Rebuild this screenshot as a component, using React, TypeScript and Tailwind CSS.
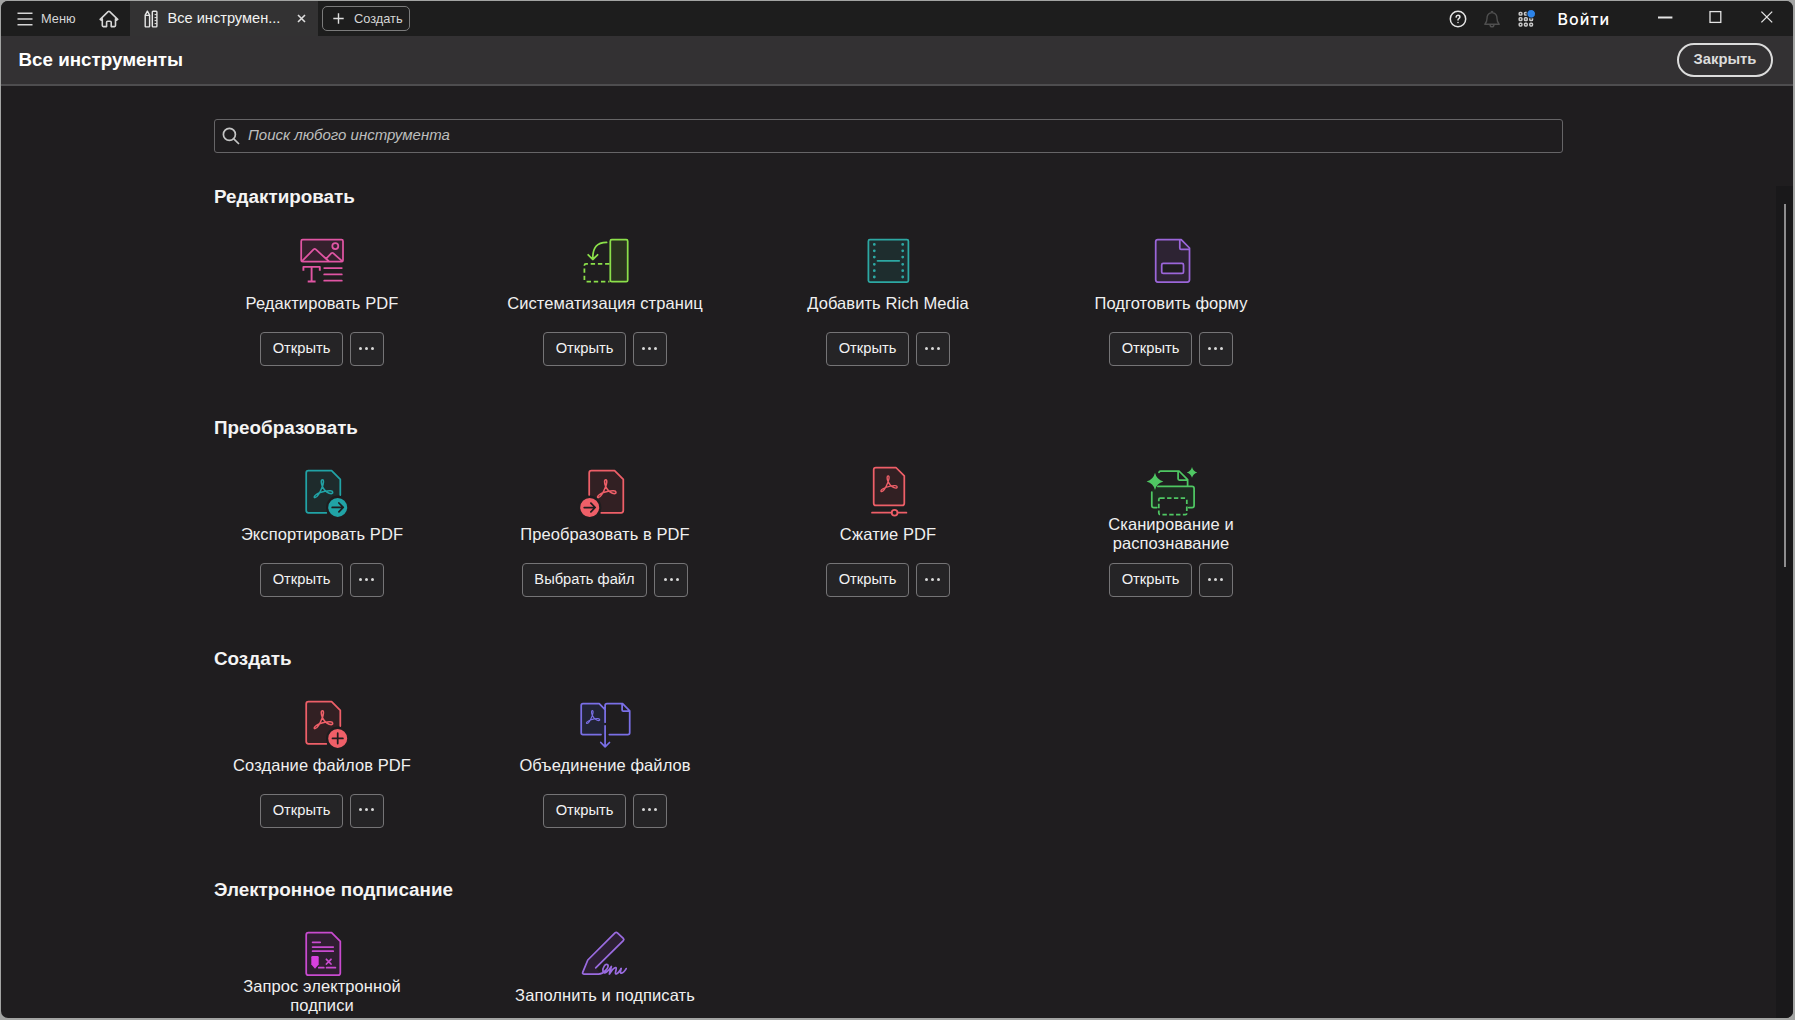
import type { ReactNode } from 'react';

type Tool = {
  title: string;
  icon: ReactNode;
  action?: string;
};

type Section = {
  title: string;
  tools: Tool[];
  collapsed?: boolean;
};

const ToolIcon = ({ color, children }: { color: string; children: ReactNode }) => (
  <svg
    viewBox="0 0 56 49"
    className="block h-[49px] w-14 shrink-0 overflow-visible"
    fill="none"
    stroke={color}
    strokeWidth="1.75"
    strokeLinecap="round"
    strokeLinejoin="round"
  >
    {children}
  </svg>
);

// Acrobat trefoil, centred on 0,0
const Trefoil = ({ x, y, scale = 1 }: { x: number; y: number; scale?: number }) => (
  <path
    transform={`translate(${x} ${y}) scale(${scale})`}
    strokeWidth={1.55}
    d="M0-9.4C-1.7-9.4-1.5-6.2-.2-3C1.2.3 3.6 2.8 6.6 4C9 4.9 10.4 4.3 10.2 3C9.9 1.4 6.5 1.3 2.5 2.1C-1 2.8-4.8 4.1-6.9 5.8C-8.6 7.1-8.6 8.6-7.4 8.4C-5.4 8.1-2.4 3-.5-1.7C1.1-5.6 1.6-9.4 0-9.4Z"
  />
);

const EditIcon = () => (
  <ToolIcon color="#e055a3">
    <rect x="7.2" y="5.7" width="41.8" height="22" rx="1.5" fill="#35202d" />
    <circle cx="41.3" cy="12" r="3" />
    <path d="M8 27.2L19.6 15.4Q20.7 14.5 21.8 15.4L34.5 27M32.2 24.6L37.4 19.2Q38.3 18.4 39.2 19.2L48.2 27.2" />
    <path d="M9.4 36.8V32.9H25.8V36.8M17.6 33V47.4M13.7 47.5H21.6" strokeLinecap="butt" strokeWidth="1.9" />
    <path d="M30.2 34H47.8M30.2 40.4H47.8M30.2 46.7H47.8" />
  </ToolIcon>
);

const OrganizeIcon = () => (
  <ToolIcon color="#8be04a">
    <rect x="33.3" y="5.7" width="17.4" height="42" rx="1.5" fill="#2a331f" />
    <path d="M32.5 29.8H9Q7.4 29.8 7.4 31.4V46Q7.4 47.6 9 47.6H32.5" strokeDasharray="4.4 2.8" strokeLinecap="butt" />
    <path d="M29.6 8.4C20 8.4 15.7 13.2 15.7 25.3M11.2 20.8L15.7 25.5L20.6 20.8" />
  </ToolIcon>
);

const MediaIcon = () => (
  <ToolIcon color="#2da8a3">
    <rect x="8.4" y="5.7" width="40" height="42.3" rx="1.5" fill="#1e2d2e" />
    <path d="M17.5 26.8H39.2" />
    {[10.4, 16.8, 23.1, 30.3, 36.7, 43].map((y) => (
      <path key={y} d={`M14.3 ${y}h.01M42.7 ${y}h.01`} strokeWidth="2.8" />
    ))}
  </ToolIcon>
);

const FormIcon = () => (
  <ToolIcon color="#9b66d9">
    <path d="M14.8 5.7H38.2L46.5 14V45.8Q46.5 48 44.3 48H14.8Q12.7 48 12.7 45.8V7.8Q12.7 5.7 14.8 5.7Z" fill="#2d2333" />
    <path d="M36.8 6V14Q36.8 15.3 38 15.3H46" />
    <rect x="18.7" y="29.4" width="21.8" height="10" rx="1.5" fill="#1f1d1f" />
  </ToolIcon>
);

const ExportIcon = () => (
  <ToolIcon color="#21a3a6">
    <path d="M46.3 30V14.4L37.6 5.7H14.4Q12.2 5.7 12.2 7.9V45.6Q12.2 47.8 14.4 47.8H32.4L38 32Z" fill="#1e2b2c" stroke="none" />
    <path d="M46.3 30V14.4L37.6 5.7H14.4Q12.2 5.7 12.2 7.9V45.6Q12.2 47.8 14.4 47.8H32.4" />
    <Trefoil x={28.5} y={24.2} />
    <circle cx="43.7" cy="42.4" r="10.6" fill="#21a3a6" stroke="#1f1d1f" strokeWidth="2.2" />
    <path d="M38.2 42.4H49M44.9 38L49.2 42.4L44.9 46.8" stroke="#1f1d1f" />
  </ToolIcon>
);

const ConvertIcon = () => (
  <ToolIcon color="#ee5f68">
    <path d="M12.2 30V7.9Q12.2 5.7 14.4 5.7H37.6L46.3 14.4V45.6Q46.3 47.8 44.1 47.8H24.2L18 33Z" fill="#322023" stroke="none" />
    <path d="M12.2 30V7.9Q12.2 5.7 14.4 5.7H37.6L46.3 14.4V45.6Q46.3 47.8 44.1 47.8H24.2" />
    <Trefoil x={28.8} y={24.2} />
    <circle cx="12.7" cy="42.5" r="10.6" fill="#ee5f68" stroke="#1f1d1f" strokeWidth="2.2" />
    <path d="M7.2 42.5H18M13.9 38.1L18.2 42.5L13.9 46.9" stroke="#1f1d1f" />
  </ToolIcon>
);

const CompressIcon = () => (
  <ToolIcon color="#ee5f68">
    <path d="M15.8 2.5H35.9L44.3 10.9V38.2Q44.3 40.4 42.1 40.4H15.8Q13.7 40.4 13.7 38.2V4.7Q13.7 2.5 15.8 2.5Z" fill="#322023" />
    <Trefoil x={28.2} y={19.2} scale={0.88} />
    <path d="M12 47.7H31.6M37.6 47.7H46.4" />
    <circle cx="34.6" cy="47.7" r="2.9" />
  </ToolIcon>
);

const ScanIcon = () => (
  <ToolIcon color="#4fc763">
    <path d="M14.9 21.4H49Q51.1 21.4 51.1 23.5V40.5Q51.1 42.6 49 42.6H8.8V25Z" fill="#1e2c21" stroke="none" />
    <path d="M16 7.4Q16.2 6 17.6 6H36L44.6 14.6V20.8M35.1 6.2V13.8Q35.1 15 36.3 15H44.3" />
    <path d="M14.9 21.4H49Q51.1 21.4 51.1 23.5V40.5Q51.1 42.6 49 42.6H45.8M8.8 27V40.5Q8.8 42.6 10.9 42.6H13.8" />
    <rect x="15.8" y="33.1" width="28" height="16.5" rx="1.5" fill="#1f1d1f" strokeDasharray="4.4 2.4" strokeLinecap="butt" />
    <path
      d="M12 7.8Q13.6 14.8 20.4 16.4Q13.6 18 12 25Q10.4 18 3.6 16.4Q10.4 14.8 12 7.8ZM49 2Q50.1 6.3 54.3 7.4Q50.1 8.5 49 12.8Q47.9 8.5 43.7 7.4Q47.9 6.3 49 2Z"
      fill="#4fc763"
      stroke="none"
    />
  </ToolIcon>
);

const CreateIcon = () => (
  <ToolIcon color="#ee5f68">
    <path d="M46.3 30V14.4L37.6 5.7H14.4Q12.2 5.7 12.2 7.9V45.6Q12.2 47.8 14.4 47.8H32.4L38 32Z" fill="#322023" stroke="none" />
    <path d="M46.3 30V14.4L37.6 5.7H14.4Q12.2 5.7 12.2 7.9V45.6Q12.2 47.8 14.4 47.8H32.4" />
    <Trefoil x={28.5} y={24.2} />
    <circle cx="43.7" cy="42.4" r="10.6" fill="#ee5f68" stroke="#1f1d1f" strokeWidth="2.2" />
    <path d="M38.5 42.4H48.9M43.7 37.2V47.6" stroke="#1f1d1f" />
  </ToolIcon>
);

const CombineIcon = () => (
  <ToolIcon color="#7a6fe6">
    <path d="M24 38.5H6Q4.2 38.5 4.2 36.7V9.5Q4.2 7.7 6 7.7H22.2L28.1 13.6V38.5Z" fill="#222436" stroke="none" />
    <path d="M24 38.5H6Q4.2 38.5 4.2 36.7V9.5Q4.2 7.7 6 7.7H22.2L28.1 13.6M28.1 26.2V9.5Q28.1 7.7 30 7.7H45.6L52.7 14.8V36.7Q52.7 38.5 50.8 38.5H32.3M45.1 8V14Q45.1 15.2 46.3 15.2H52.3" />
    <Trefoil x={15.4} y={21.4} scale={0.72} />
    <path d="M28.1 29.8V50.8M23.8 46.5L28.1 50.9L32.5 46.5" />
  </ToolIcon>
);

const RequestSignIcon = () => (
  <ToolIcon color="#c94bd0">
    <path d="M14.4 5.7H37.6L46.3 14.4V46Q46.3 48.2 44.1 48.2H14.4Q12.2 48.2 12.2 46V7.9Q12.2 5.7 14.4 5.7Z" fill="#2f1e31" />
    <path d="M18.6 15.3H26.2M18.6 20H39.2M18.6 24.2H39.2M24.8 40.7H29.8M32.6 40.7H41.4M32.4 32.3L37 37M37 32.3L32.4 37" />
    <path d="M18.6 29H23.4Q24.7 29 24.7 30.3V37.6L21 41.8L17.3 37.6V30.3Q17.3 29 18.6 29Z" fill="#d840df" stroke="none" />
  </ToolIcon>
);

const FillSignIcon = () => (
  <ToolIcon color="#9a6be0">
    <path d="M10.8 33L38 5.9Q39.2 4.8 40.4 5.9L46.3 11.4Q47.4 12.5 46.3 13.7L18.7 41L24 47H6.8Q5.2 47 5.7 45.4Z" fill="#2c1f33" stroke="none" />
    <path d="M18.7 40.9L46.3 13.7Q47.4 12.5 46.3 11.4L40.4 5.9Q39.2 4.8 38 5.9L10.8 33L5.7 45.4Q5.2 47 6.8 47H21.5C27 47 32.6 39.8 30.6 37.6C28.6 36 24.8 41.6 26 44.6C27.3 47.6 31.4 44.6 34.4 39.4C33.8 42.6 32.6 44.9 32.4 47C34.6 43.4 37.2 40 38.8 40.6C40.4 41.2 37.6 45.4 38.6 46.7C39.8 47.9 42.6 44.4 44.2 41.4C43.2 44.4 43 46.4 44.6 46.2C46.4 45.9 48 43.6 49.2 41.6" />
  </ToolIcon>
);

const sections: Section[] = [
  {
    title: 'Редактировать',
    tools: [
      { title: 'Редактировать PDF', icon: <EditIcon /> },
      { title: 'Систематизация страниц', icon: <OrganizeIcon /> },
      { title: 'Добавить Rich Media', icon: <MediaIcon /> },
      { title: 'Подготовить форму', icon: <FormIcon /> },
    ],
  },
  {
    title: 'Преобразовать',
    tools: [
      { title: 'Экспортировать PDF', icon: <ExportIcon /> },
      { title: 'Преобразовать в PDF', icon: <ConvertIcon />, action: 'Выбрать файл' },
      { title: 'Сжатие PDF', icon: <CompressIcon /> },
      { title: 'Сканирование и распознавание', icon: <ScanIcon /> },
    ],
  },
  {
    title: 'Создать',
    tools: [
      { title: 'Создание файлов PDF', icon: <CreateIcon /> },
      { title: 'Объединение файлов', icon: <CombineIcon /> },
    ],
  },
  {
    title: 'Электронное подписание',
    collapsed: true,
    tools: [
      { title: 'Запрос электронной подписи', icon: <RequestSignIcon /> },
      { title: 'Заполнить и подписать', icon: <FillSignIcon /> },
    ],
  },
];

const ToolCard = ({ title, icon, action = 'Открыть', collapsed }: Tool & { collapsed?: boolean }) => (
  <div className="flex w-[283px] flex-col items-center">
    {icon}
    <div className="flex h-10 w-[200px] items-center justify-center text-center text-[16.5px] leading-[18.7px] tracking-[0.08px] text-[#f0f0f0]">
      <span>{title}</span>
    </div>
    {!collapsed && (
      <div className="mt-[9px] flex h-[34px] gap-[7px]">
        <button className="rounded-[4px] border border-[#757476] bg-[#252426] px-[11.5px] pb-0.5 text-[14.7px] leading-none text-[#f2f2f2]">
          {action}
        </button>
        <button className="flex w-[34px] items-center justify-center gap-[3px] rounded-[4px] border border-[#757476] bg-[#252426] pb-0.5">
          {[0, 1, 2].map((dot) => (
            <span key={dot} className="size-[3px] rounded-full bg-[#d8d8d8]" />
          ))}
        </button>
      </div>
    )}
  </div>
);

const TitleBar = () => (
  <div className="flex h-[35px] shrink-0 items-stretch bg-[#1d1d1d] text-[#d6d6d6]">
    <button className="flex w-[87px] shrink-0 items-center pl-4">
      <svg viewBox="0 0 16 14" className="h-3.5 w-4" stroke="currentColor" strokeWidth="1.5">
        <path d="M.5 1.3H15.5M.5 7H15.5M.5 12.7H15.5" />
      </svg>
      <span className="ml-2 text-[12.8px]">Меню</span>
    </button>
    <button className="flex w-[42px] shrink-0 items-center pl-[11px]">
      <svg viewBox="0 0 20 18" className="h-[18px] w-5" fill="none" stroke="currentColor" strokeWidth="1.6" strokeLinejoin="round" strokeLinecap="round">
        <path d="M3.3 8.9V15.6Q3.3 16.6 4.3 16.6H7.6V12.3Q7.6 11.3 8.6 11.3H11.2Q12.2 11.3 12.2 12.3V16.6H15.5Q16.5 16.6 16.5 15.6V8.9M1.2 9.4L9.1 1.6Q9.9 .9 10.7 1.6L18.7 9.4L17.6 10.2L16.5 9.2M1.2 9.4L2.2 10.2L3.3 9.2" />
      </svg>
    </button>
    <div className="flex w-[188px] shrink-0 items-center bg-[#333233] pl-[14px]">
      <svg viewBox="0 0 14 18" className="h-[18px] w-3.5" fill="none" stroke="#e6e6e6" strokeWidth="1.4" strokeLinejoin="round">
        <path d="M1.2 5.2L3.4 1.2L5.6 5.2V16.2Q5.6 16.9 4.9 16.9H1.9Q1.2 16.9 1.2 16.2ZM1.2 5.4H5.6" />
        <rect x="8.3" y="1.2" width="4.6" height="15.7" rx=".8" />
        <path d="M10.6 4.6H12.8M10.6 7.6H12.8M10.6 10.6H12.8M10.6 13.6H12.8" strokeWidth="1" />
      </svg>
      <span className="ml-[9.5px] w-[120px] text-[14.6px] text-[#f2f2f2]">Все инструмен...</span>
      <svg viewBox="0 0 9 9" className="ml-[9px] size-[9px]" stroke="#dedede" strokeWidth="1.6">
        <path d="M1 1L8 8M8 1L1 8" />
      </svg>
    </div>
    <button className="my-[5px] ml-1 flex w-[88px] shrink-0 items-center rounded-[5px] border border-[#7b7b7b] pl-2.5">
      <svg viewBox="0 0 11 11" className="size-[11px]" stroke="#dedede" strokeWidth="1.4">
        <path d="M5.5 .3V10.7M.3 5.5H10.7" />
      </svg>
      <span className="ml-2.5 text-[12.8px]">Создать</span>
    </button>
    <div className="ml-auto flex items-center">
      <svg viewBox="0 0 18 18" className="size-[18px]" fill="none" stroke="#e4e4e4" strokeWidth="1.5" strokeLinecap="round">
        <circle cx="9" cy="9" r="7.7" />
        <path d="M7.1 7.1Q7.2 5.3 9 5.3Q10.9 5.3 10.9 6.9Q10.9 7.9 9.8 8.6Q9 9.1 9 10.1M9 12.5V12.6" />
      </svg>
      <svg viewBox="0 0 18 18" className="ml-4 size-[18px]" fill="none" stroke="#4f4f4f" strokeWidth="1.4" strokeLinejoin="round">
        <path d="M1.8 14.2Q4 12.4 4 8.6Q4 3.4 8.2 2.9Q8.2 1.4 9 1.4Q9.8 1.4 9.8 2.9Q14 3.4 14 8.6Q14 12.4 16.2 14.2ZM7 14.6Q7.2 16.8 9 16.8Q10.8 16.8 11 14.6" />
      </svg>
      <svg viewBox="0 0 18 18" className="ml-4 size-[18px]" fill="none" stroke="#c8c8c8" strokeWidth="1.5">
        {[2.4, 7.8, 13.2].map((y) =>
          [2.2, 7.5, 12.8].map((x) => <rect key={`${x}-${y}`} x={x} y={y} width="2.7" height="2.7" rx=".8" />)
        )}
        <circle cx="14.2" cy="3.8" r="4.3" fill="#2c83e8" stroke="#1d1d1d" strokeWidth="1" />
      </svg>
      <span className="ml-[22.5px] w-[56px] font-['Inter','Liberation_Sans',sans-serif] text-[16px] font-medium tracking-[1.1px] text-white">Войти</span>
      <svg viewBox="0 0 116 14" className="ml-[43.5px] mr-5 mb-1 h-3.5 w-[116px]" fill="none" stroke="#e4e4e4" strokeWidth="1.3">
        <path d="M1 7.6H15.4" strokeWidth="2" />
        <rect x="53" y="1.6" width="10.8" height="10.8" />
        <path d="M104.4 1.6L115.2 12.4M115.2 1.6L104.4 12.4" />
      </svg>
    </div>
  </div>
);

export default function App() {
  return (
    <div className="h-[1020px] w-[1795px] overflow-hidden bg-[#a3a4a3] pt-px pl-px font-['Liberation_Sans',Arial,sans-serif]">
      <div className="flex h-[1017px] w-[1792px] flex-col overflow-hidden rounded-[7px] bg-[#1f1d1f]">
        <TitleBar />

        <header className="flex h-[50px] shrink-0 items-center justify-between border-b-2 border-[#4e4d4f] bg-[#333133] pr-[20px] pl-[17.5px]">
          <h1 className="text-[18.8px] leading-6 font-bold text-white">Все инструменты</h1>
          <button className="h-[34px] w-[96px] rounded-full border-2 border-[#dcdcdc] pb-0.5 text-[14.8px] leading-none font-bold text-[#dcdcdc]">
            Закрыть
          </button>
        </header>

        <div className="shrink-0 pt-[33px] pl-[213px]">
          <div className="flex h-[34px] w-[1349px] items-center rounded-[3px] border border-[#666567] pl-[7px]">
            <svg viewBox="0 0 18 18" className="size-[18px]" fill="none" stroke="#c4c4c4" strokeWidth="1.7">
              <circle cx="7.4" cy="7.4" r="6" />
              <path d="M11.8 11.8L17 17" />
            </svg>
            <span className="ml-2 pb-0.5 text-[15px] text-[#bdbdbd] italic">Поиск любого инструмента</span>
          </div>
        </div>

        <main className="mt-[33px] flex min-h-0 grow">
          <div className="grow overflow-hidden pt-[0.4px]">
            {sections.map((section) => (
              <section key={section.title} className="h-[230.8px]">
                <h2 className="pl-[213px] text-[18.85px] leading-[22px] font-bold text-[#f4f4f4]">{section.title}</h2>
                <div className="mt-[26px] flex pl-[179.5px]">
                  {section.tools.map((tool) => (
                    <ToolCard key={tool.title} {...tool} collapsed={section.collapsed} />
                  ))}
                </div>
              </section>
            ))}
          </div>
          <div className="w-[17px] shrink-0 bg-[#19181a] pt-[18px] pl-2">
            <div className="h-[363px] w-0.5 bg-[#8d8c8e]" />
          </div>
        </main>
      </div>
    </div>
  );
}
